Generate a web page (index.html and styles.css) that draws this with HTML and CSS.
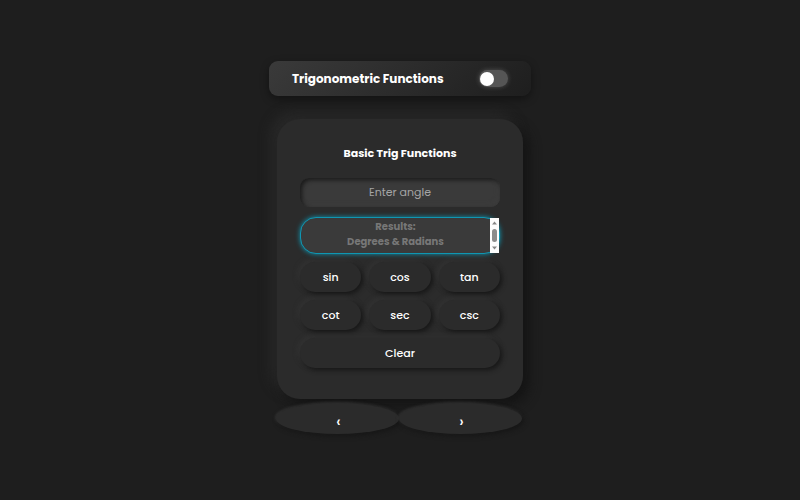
FILE: index.html
```html
<!DOCTYPE html>
<html lang="en">
<head>
<meta charset="utf-8">
<meta name="viewport" content="width=device-width, initial-scale=1">
<title>Trigonometric Functions</title>
<link rel="stylesheet" href="styles.css">
</head>
<body>
<header class="topbar">
  <h1 class="topbar-title">Trigonometric Functions</h1>
  <input class="switch" type="checkbox" role="switch" aria-label="Light theme">
</header>
<main class="card">
  <h2 class="card-title">Basic Trig Functions</h2>
  <input class="angle" type="text" placeholder="Enter angle" aria-label="Angle">
  <div class="results-wrap">
    <textarea class="results" readonly aria-label="Results" placeholder="Results:
Degrees &amp; Radians"></textarea>
    <svg class="scroller" viewBox="0 0 9 35" aria-hidden="true">
      <rect width="9" height="35" fill="#fcfcfc"/>
      <path d="M2 6.500 4.500 3.500 7 6.500Z" fill="#858585"/>
      <rect x="2" y="11" width="5" height="13" rx="2.500" fill="#8b8b8b"/>
      <path d="M2 28.500 4.500 31.500 7 28.500Z" fill="#858585"/>
    </svg>
  </div>
  <div class="keys">
    <button class="key" type="button">sin</button>
    <button class="key" type="button">cos</button>
    <button class="key" type="button">tan</button>
    <button class="key" type="button">cot</button>
    <button class="key" type="button">sec</button>
    <button class="key" type="button">csc</button>
    <button class="key key-wide" type="button">Clear</button>
  </div>
</main>
<nav class="pager" aria-label="Calculator pages">
  <button class="page" type="button">‹</button>
  <button class="page" type="button">›</button>
</nav>
</body>
</html>
```
FILE: styles.css
```css
* {
  box-sizing: border-box;
}

body {
  margin: 0;
  min-height: 100vh;
  padding-bottom: 5px;
  display: flex;
  flex-direction: column;
  align-items: center;
  justify-content: center;
  background: #1e1e1e;
  color: #fff;
  font-family: Poppins, Inter, "Open Sans", sans-serif;
}

button,
input,
textarea {
  font-family: inherit;
}

.topbar {
  width: 262px;
  max-width: 100%;
  padding: 9px 23px;
  display: flex;
  align-items: center;
  justify-content: space-between;
  border-radius: 9px;
  background: linear-gradient(135deg, #3a3a3a, #1e1e1e);
  box-shadow: 0 3px 9px rgba(0, 0, 0, 0.4);
}

.topbar-title {
  margin: 0;
  font-size: 12px;
  line-height: 17px;
  font-weight: 700;
}

.switch {
  appearance: none;
  width: 29px;
  height: 17px;
  margin: 0;
  padding: 2px;
  border-radius: 9px;
  background: #555;
  box-shadow: 0 0 5px rgba(255, 255, 255, 0.2);
}

.switch::before {
  content: "";
  display: block;
  width: 14px;
  height: 14px;
  margin-left: -1px;
  border-radius: 50%;
  background: #fff;
}

.switch:checked::before {
  margin-left: 12px;
}

.card {
  width: 246px;
  max-width: 100%;
  margin-top: 23px;
  padding: 26px 23px 31px;
  border-radius: 23px;
  background: #2b2b2b;
  box-shadow: 6px 6px 12px #141414, -6px -6px 12px #292929;
}

.card-title {
  margin: 0 0 16px;
  font-size: 11px;
  line-height: 17px;
  font-weight: 700;
  text-align: center;
}

.angle {
  display: block;
  width: 100%;
  height: 29px;
  margin-bottom: 10px;
  padding: 0 8px;
  border: 0;
  border-radius: 9px;
  background: #3a3a3a;
  color: #fff;
  box-shadow: inset 2px 2px 4px #1a1a1a, inset -2px -2px 4px #3d3d3d;
  font-size: 11px;
  text-align: center;
}

.angle::placeholder {
  color: #a5a5a5;
}

.results-wrap {
  position: relative;
  margin-bottom: 8px;
}

.results {
  display: block;
  width: 100%;
  height: 37px;
  padding: 1px 9px 0 0;
  border: 1px solid #0f96b2;
  border-radius: 16px;
  outline: 0;
  resize: none;
  overflow: hidden;
  background: #3a3a3a;
  color: #fff;
  box-shadow: 0 0 5px #0f96b2;
  font-size: 10px;
  line-height: 15px;
  font-weight: 700;
  text-align: center;
}

.results::placeholder {
  color: #777;
}

.scroller {
  position: absolute;
  top: 1px;
  right: 1px;
  width: 9px;
  height: 35px;
}

.keys {
  display: grid;
  grid-template-columns: repeat(3, 1fr);
  gap: 8px;
}

.key {
  height: 30px;
  padding: 0;
  border: 0;
  border-radius: 15px;
  background: #2b2b2b;
  color: #fff;
  box-shadow: 2px 2px 5px #161616, -2px -2px 5px #353535;
  font-size: 11px;
  font-weight: 500;
}

.key-wide {
  grid-column: 1 / -1;
}

.pager {
  width: 246px;
  max-width: 100%;
  margin: 4px 2px 0 0;
  display: flex;
}

.page {
  flex: 1;
  height: 31px;
  padding: 7px 0 0 2px;
  border: 0;
  border-radius: 50%;
  background: #2b2b2b;
  color: #fff;
  box-shadow: 2px 2px 5px #161616, -1px -1px 3px #353535;
  font-size: 15px;
  line-height: 20px;
  font-weight: 500;
}
```
